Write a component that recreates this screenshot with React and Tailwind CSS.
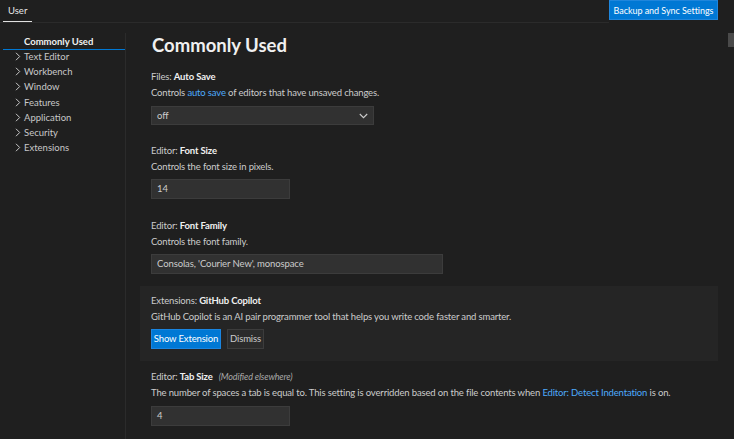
import React from "react";

const Chevron = ({ cls = "" }) => (
  <svg width="6" height="9" viewBox="0 0 6 9" className={cls} fill="none" stroke="currentColor" strokeWidth="1">
    <path d="M1 0.8l3.7 3.7L1 8.2" />
  </svg>
);

const Label = ({ cat, name, extra }) => (
  <div className="text-[9.5px] leading-[16px] tracking-[-0.15px] text-[#cccccc] whitespace-nowrap">
    {cat}: <span className="font-bold text-[#f0f0f0]">{name}</span>
    {extra && <span className="ml-[6px] italic text-[9px] text-[#a8a8a8]">{extra}</span>}
  </div>
);

const Desc = ({ children }) => (
  <div className="text-[9.5px] leading-[16px] tracking-[-0.15px] text-[#cccccc] whitespace-nowrap">{children}</div>
);

const Input = ({ w, value, mt = "mt-[4px]" }) => (
  <div className={`${mt} h-[20px] ${w} bg-[#313131] border border-[#3c3c3c] px-[5px] text-[9.5px] leading-[18px] tracking-[-0.1px] text-[#cccccc]`}>{value}</div>
);

export default function App() {
  const items = ["Text Editor", "Workbench", "Window", "Features", "Application", "Security", "Extensions"];
  return (
    <div className="w-[734px] h-[439px] bg-[#1f1f1f] overflow-hidden text-[#cccccc] flex flex-col" style={{ fontFamily: 'Lato, "Noto Sans", sans-serif' }}>
      <div className="h-[23px] flex items-start pr-[16px] shrink-0">
        <div className="flex-1 h-[23px] border-b border-[#2b2b2b] flex pl-[3px]">
          <div className="h-[22px] px-[5px] text-[9.5px] leading-[20px] text-[#e7e7e7] border-b border-[#e0e0e0] pt-[1px]">User</div>
        </div>
        <div className="h-[20px] w-[109px] flex items-center justify-center bg-[#0078d4] text-white text-[9px] tracking-[-0.05px] leading-[19px] border border-[#1f86dc]">Backup and Sync Settings</div>
      </div>
      <div className="flex-1 flex mt-[10px] relative">
        <div className="w-[126px] border-r border-[#2b2b2b] pl-[3px] shrink-0">
          <div className="mt-[2px] h-[15px] border-b border-[#0078d4] pl-[21px] text-[9.5px] leading-[14px] font-bold text-[#f0f0f0]">Commonly Used</div>
          <div className="-mt-[1px]">
            {items.map((t) => (
              <div key={t} className="h-[15.17px] flex items-center text-[9.5px] leading-[15px] text-[#c8c8c8]">
                <Chevron cls="ml-[12px] mr-[3px] text-[#c8c8c8]" />
                <span>{t}</span>
              </div>
            ))}
          </div>
        </div>
        <div className="flex-1 pl-[14px] pr-[16px]">
          <div className="pl-[12px] text-[18.5px] leading-[24px] font-bold text-[#f0f0f0]">Commonly Used</div>
          <div className="pl-[11px] mt-[12px]">
            <Label cat="Files" name="Auto Save" />
            <Desc>Controls <span className="text-[#4daafc]">auto save</span> of editors that have unsaved changes.</Desc>
            <div className="mt-[5px] h-[19px] w-[223px] bg-[#313131] border border-[#3c3c3c] pl-[5px] pr-[5px] text-[9.5px] leading-[17px] flex items-center justify-between">
              <span>off</span>
              <svg width="9" height="6" viewBox="0 0 9 6" fill="none" stroke="#cccccc" strokeWidth="1.1"><path d="M0.8 1l3.7 3.7L8.2 1" /></svg>
            </div>
          </div>
          <div className="pl-[11px] mt-[18px]">
            <Label cat="Editor" name="Font Size" />
            <Desc>Controls the font size in pixels.</Desc>
            <Input w="w-[139px]" value="14" />
          </div>
          <div className="pl-[11px] mt-[19px]">
            <Label cat="Editor" name="Font Family" />
            <Desc>Controls the font family.</Desc>
            <Input w="w-[292px]" value="Consolas, 'Courier New', monospace" />
          </div>
          <div className="mt-[12px] bg-[#252525] pl-[11px] pt-[7px] pb-[12px]">
            <Label cat="Extensions" name="GitHub Copilot" />
            <Desc>GitHub Copilot is an AI pair programmer tool that helps you write code faster and smarter.</Desc>
            <div className="mt-[4px] flex gap-[6px]">
              <div className="h-[20px] w-[70px] flex items-center justify-center bg-[#0078d4] text-white text-[9.5px] tracking-[-0.15px] border border-[#1a85e0]">Show Extension</div>
              <div className="h-[20px] w-[37px] flex items-center justify-center bg-[#2b2b2b] text-[#cccccc] text-[9.5px] tracking-[-0.15px] border border-[#3c3c3c]">Dismiss</div>
            </div>
          </div>
          <div className="pl-[11px] mt-[8px]">
            <Label cat="Editor" name="Tab Size" extra="(Modified elsewhere)" />
            <Desc>The number of spaces a tab is equal to. This setting is overridden based on the file contents when <span className="text-[#4daafc]">Editor: Detect Indentation</span> is on.</Desc>
            <Input w="w-[139px]" value="4" mt="mt-[5px]" />
          </div>
        </div>
        <div className="absolute right-0 top-0 w-[6px] h-[14px] bg-[#4a4a4a]" />
      </div>
    </div>
  );
}
